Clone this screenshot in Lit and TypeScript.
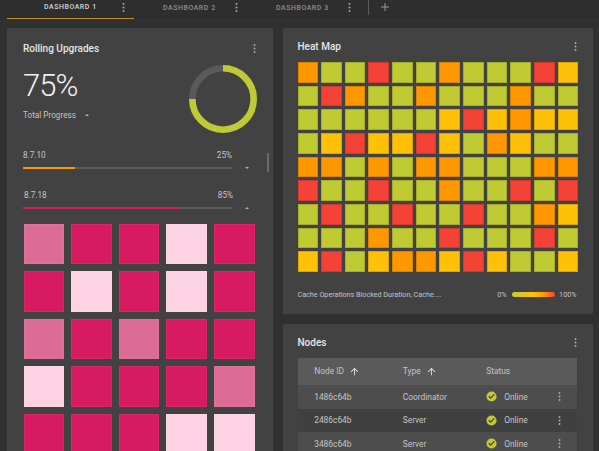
import { LitElement, html, css, svg } from "lit"
import { customElement } from "lit/decorators.js"

const heat = [
  "OGGRGGOGGGRY",
  "GROGGOGGGOGG",
  "GGGGGGYRYOYY",
  "GYRYYRYGOYGG",
  "OOGOGOOGGGOO",
  "RGGRGGOGGRGR",
  "GRGGRGGRGGOY",
  "GGGOGGRGGGRG",
  "YRGYOOYRYGGY",
]

const pink = ["MPPLP", "PLPLP", "MPMPP", "LPPPM", "PPPLL"]

const nodes = [
  { id: "1486c64b", type: "Coordinator" },
  { id: "2486c64b", type: "Server" },
  { id: "3486c64b", type: "Server" },
]

const kebab = (cls = "") => html`<svg class="kebab ${cls}" width="3" height="9" viewBox="0 0 3 9">
  <circle cx="1.5" cy="1.1" r="1"></circle>
  <circle cx="1.5" cy="4.5" r="1"></circle>
  <circle cx="1.5" cy="7.9" r="1"></circle>
</svg>`

const arrowUp = html`<svg class="arrow" width="11" height="11" viewBox="0 0 24 24">
  <path d="M4 12l1.41 1.41L11 7.83V20h2V7.83l5.58 5.59L20 12l-8-8-8 8z"></path>
</svg>`

const check = html`<svg class="check" width="11" height="11" viewBox="0 0 24 24">
  <circle cx="12" cy="12" r="11" fill="#c0ca33"></circle>
  ${svg`<path d="M10 17.2l-5-5 1.8-1.8 3.2 3.2 7.2-7.2 1.8 1.8z" fill="#424242"></path>`}
</svg>`

@customElement("app-root")
export class AppRoot extends LitElement {
  static styles = css`
    :host {
      display: block;
      width: 599px;
      height: 451px;
      overflow: hidden;
      background: #303030;
      font-family: Roboto, sans-serif;
      color: #c4c4c4;
    }

    .kebab {
      fill: #a8a8a8;
      display: block;
      flex: none;
    }

    .tabs {
      display: flex;
      align-items: flex-start;
      height: 17px;
      background: #2e2e2e;
      padding-left: 7px;
      border-bottom: 1px solid #2a2a2a;
    }
    .tab {
      display: flex;
      align-items: center;
      justify-content: space-between;
      box-sizing: border-box;
      width: 113px;
      height: 15px;
      padding: 0 9px 0 29px;
      font-size: 7px;
      font-weight: 500;
      letter-spacing: 0.53px;
      color: #8f8f8f;
    }
    .tab.active {
      width: 127px;
      height: 18.5px;
      padding: 0 9px 3.5px 37px;
      color: #d6d6d6;
      border-bottom: 1.5px solid #c98f2c;
    }
    .sep {
      width: 1px;
      height: 15px;
      background: #5c5c5c;
      margin-left: 8px;
    }
    .plus {
      width: 8px;
      height: 8px;
      margin: 3px 0 0 12px;
      fill: #9a9a9a;
    }

    .board {
      display: grid;
      grid-template-columns: 265.5px 310px;
      gap: 10px;
      padding: 10px 0 0 7px;
    }
    .col {
      display: flex;
      flex-direction: column;
      gap: 10px;
    }
    .card {
      background: #424242;
      box-sizing: border-box;
      position: relative;
    }

    .head {
      display: flex;
      justify-content: space-between;
      align-items: center;
      color: #e6e6e6;
      font-weight: 500;
    }
    .title {
      font-size: 10px;
    }

    .rolling {
      height: 430px;
      padding: 14px 16.5px 0 16px;
    }
    .rolling .head {
      height: 12px;
    }
    .summary {
      display: flex;
      justify-content: space-between;
      margin-right: -1px;
      height: 68px;
      margin-top: 11px;
    }
    .pct {
      font-size: 31px;
      font-weight: 300;
      letter-spacing: -1px;
      line-height: 34px;
      margin-top: 4px;
      color: #f0f0f0;
    }
    .total {
      display: flex;
      align-items: center;
      gap: 9px;
      font-size: 8.2px;
      margin-top: 5.5px;
      line-height: 12px;
    }
    .caret {
      width: 0;
      height: 0;
      border-left: 2.5px solid transparent;
      border-right: 2.5px solid transparent;
    }
    .caret.up {
      border-bottom: 2.5px solid #b5b5b5;
    }
    .caret.down {
      border-top: 2.5px solid #b5b5b5;
    }
    .version {
      display: grid;
      grid-template-columns: 209px auto;
      column-gap: 13px;
      align-items: center;
      justify-content: start;
    }
    .version .labels {
      grid-column: 1;
      display: flex;
      justify-content: space-between;
      font-size: 8.2px;
      line-height: 12px;
    }
    .version .track {
      grid-column: 1;
      height: 2px;
      background: #5a5a5a;
      margin-top: 6px;
    }
    .version .fill {
      height: 100%;
    }
    .version .caret {
      grid-column: 2;
      margin-top: 6px;
    }
    .v1 {
      margin-top: 16px;
    }
    .v2 {
      margin-top: 20px;
    }
    .v2 .labels {
      padding: 0 0 0 1px;
      margin-right: -1px;
    }
    .thumb {
      position: absolute;
      left: 260px;
      top: 125px;
      width: 2px;
      height: 19px;
      background: #6a6a6a;
    }
    .pink {
      display: grid;
      grid-template-columns: repeat(5, 1fr);
      grid-auto-rows: 40.6px;
      gap: 7px;
      margin: 14.5px 1.3px 0 0.7px;
    }
    .pink div {
      box-sizing: border-box;
      border: 1px solid rgba(255, 255, 255, 0.05);
    }
    .pink .P {
      background: #d81b60;
    }
    .pink .M {
      background: #dc6b96;
    }
    .pink .L {
      background: #fdd3e4;
    }

    .heat {
      height: 286px;
      padding: 12px 17px 0 15px;
    }
    .right-head {
      height: 12px;
      margin-right: -1px;
    }
    .heat .grid {
      display: grid;
      grid-template-columns: repeat(12, 1fr);
      grid-auto-rows: 20.6px;
      gap: 3.07px 3px;
      width: 280.7px;
      margin-top: 10px;
    }
    .grid div {
      box-sizing: border-box;
      border: 1px solid rgba(0, 0, 0, 0.14);
    }
    .G {
      background: #c0ca33;
    }
    .O {
      background: #ff9800;
    }
    .R {
      background: #f44336;
    }
    .Y {
      background: #ffc107;
    }
    .legend {
      display: flex;
      align-items: center;
      font-size: 7.2px;
      margin-top: 17px;
      line-height: 12px;
      width: 279px;
    }
    .legend .name {
      flex: 1;
    }
    .legend .ramp {
      width: 43px;
      height: 5px;
      border-radius: 2.5px;
      margin: 0 4.5px 0 5px;
      background: linear-gradient(90deg, #c0ca33, #ffc107 48%, #ff9800 75%, #f44336);
    }

    .nodes {
      height: 130px;
      padding: 12px 17px 0 15px;
    }
    .nodes .head {
      height: 12px;
    }
    .table {
      width: 279px;
      margin-top: 9.5px;
      font-size: 8.4px;
    }
    .row {
      display: grid;
      grid-template-columns: 88.6px 83.4px 1fr 18.6px;
      align-items: center;
      padding-left: 16.7px;
      height: 23.6px;
      background: #404040;
    }
    .row.odd {
      background: #4d4d4d;
    }
    .row.header {
      height: 27.5px;
      background: #5a5a5a;
    }
    .cell {
      display: flex;
      align-items: center;
    }
    .arrow {
      fill: #e0e0e0;
      margin-left: 5.5px;
    }
    .check {
      margin-right: 7px;
    }
  `

  private version(name: string, pct: string, fill: number, color: string, dir: string, cls: string) {
    return html`<div class="version ${cls}">
      <div class="labels"><span>${name}</span><span>${pct}</span></div>
      <div></div>
      <div class="track"><div class="fill" style="width:${fill}%;background:${color}"></div></div>
      <div class="caret ${dir}"></div>
    </div>`
  }

  render() {
    return html`
      <nav class="tabs">
        <div class="tab active"><span>DASHBOARD 1</span>${kebab()}</div>
        <div class="tab"><span>DASHBOARD 2</span>${kebab()}</div>
        <div class="tab"><span>DASHBOARD 3</span>${kebab()}</div>
        <div class="sep"></div>
        <svg class="plus" viewBox="0 0 8 8"><path d="M3.5 0h1v3.5H8v1H4.500V8h-1V4.500H0v-1h3.500z"></path></svg>
      </nav>
      <main class="board">
        <section class="card rolling">
          <div class="head"><span class="title">Rolling Upgrades</span>${kebab()}</div>
          <div class="summary">
            <div>
              <div class="pct">75%</div>
              <div class="total">Total Progress <span class="caret up"></span></div>
            </div>
            <svg width="68" height="68" viewBox="0 0 68 68">
              <circle cx="34" cy="34" r="30.700" fill="none" stroke="#5a5a5a" stroke-width="6.600"></circle>
              <path d="M34 3.300A30.700 30.700 0 1 1 3.300 34" fill="none" stroke="#c0ca33" stroke-width="6.600"></path>
            </svg>
          </div>
          ${this.version("8.7.10", "25%", 25, "#ff9800", "down", "v1")}
          ${this.version("8.7.18", "85%", 75, "#d81b60", "up", "v2")}
          <div class="thumb"></div>
          <div class="pink">
            ${pink.flatMap((r) => [...r].map((c) => html`<div class=${c}></div>`))}
          </div>
        </section>
        <div class="col">
          <section class="card heat">
            <div class="head right-head"><span class="title">Heat Map</span>${kebab()}</div>
            <div class="grid">
              ${heat.flatMap((r) => [...r].map((c) => html`<div class=${c}></div>`))}
            </div>
            <div class="legend">
              <span class="name">Cache Operations Blocked Duration, Cache....</span>
              <span>0%</span><span class="ramp"></span><span>100%</span>
            </div>
          </section>
          <section class="card nodes">
            <div class="head right-head"><span class="title">Nodes</span>${kebab()}</div>
            <div class="table">
              <div class="row header">
                <div class="cell">Node ID ${arrowUp}</div>
                <div class="cell">Type ${arrowUp}</div>
                <div class="cell">Status</div>
                <div></div>
              </div>
              ${nodes.map(
                (n, i) => html`<div class="row ${i % 2 === 0 ? "odd" : ""}">
                  <div class="cell">${n.id}</div>
                  <div class="cell">${n.type}</div>
                  <div class="cell">${check}Online</div>
                  <div class="cell">${kebab()}</div>
                </div>`
              )}
            </div>
          </section>
        </div>
      </main>
    `
  }
}
